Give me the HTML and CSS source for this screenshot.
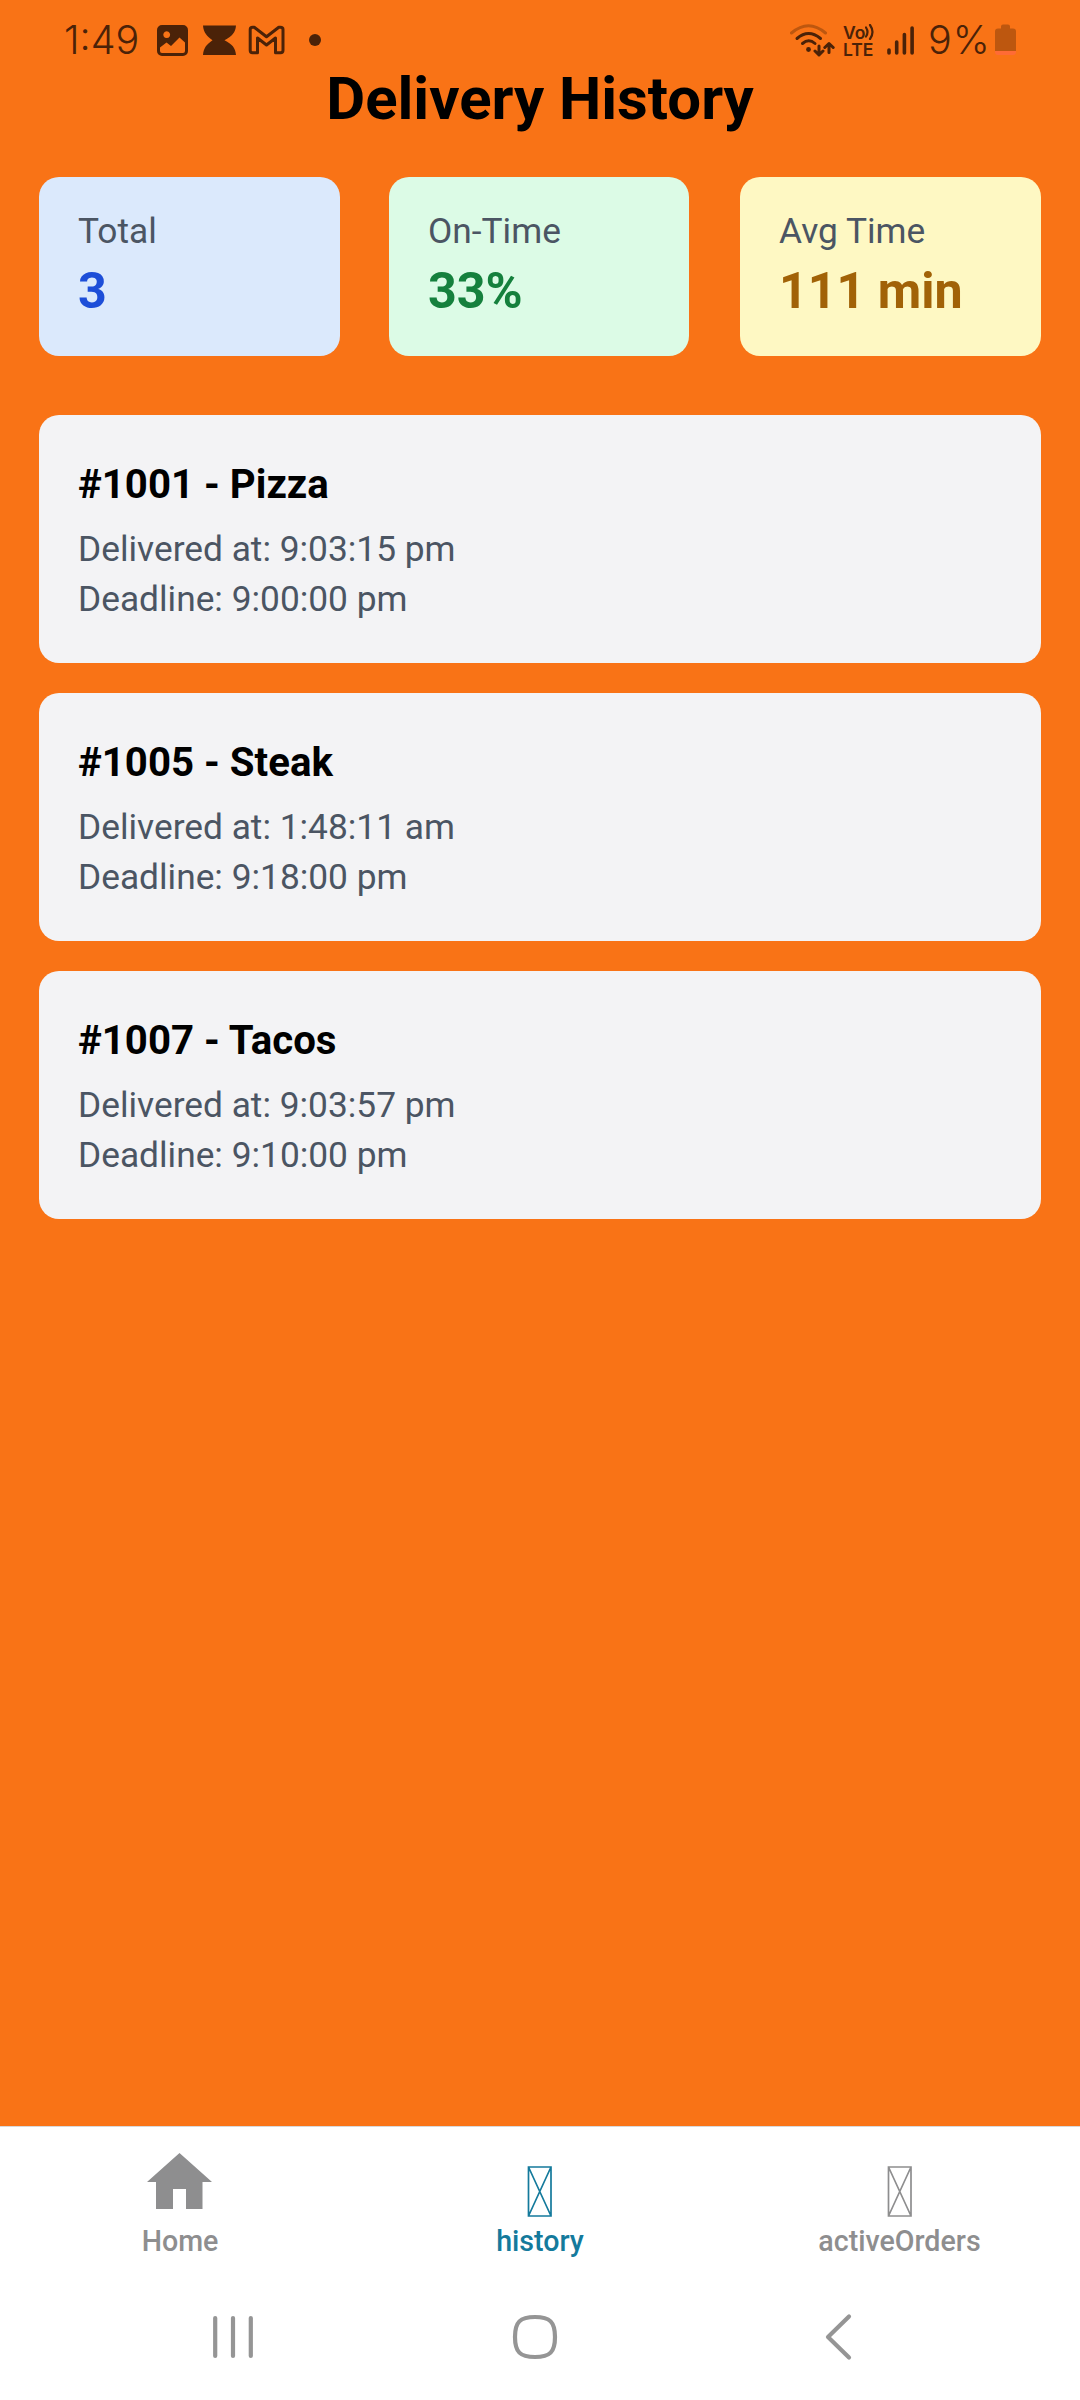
FILE: index.html
```
<!DOCTYPE html>
<html lang="en">
<head>
<meta charset="utf-8">
<title>Delivery History</title>
<link rel="stylesheet" href="styles.css">
</head>
<body>
<div class="screen">
  <header class="status">
    <span class="clock">1:49</span>
    <svg class="status-apps" width="166" height="40" viewBox="156 20 166 40">
      <path fill-rule="evenodd" d="M162 25h21a5 5 0 0 1 5 5v21a5 5 0 0 1-5 5h-21a5 5 0 0 1-5-5v-21a5 5 0 0 1 5-5zM160 47.500v3.500a2 2 0 0 0 2 2h21a2 2 0 0 0 2-2v-8.500l-5.500-5-8.500 8.500-4.500-3.500zM166.700 31.300a3.400 3.400 0 1 0 .01 0z"/>
      <path d="M203 25.500h33c-.5 7-4 11-11.500 14.800 7.500 3.700 11 7.700 11.500 14.700h-33c.5-7 4-11 9.500-14.700-5.500-3.800-9-7.800-9.500-14.800z"/>
      <path class="mail" d="M250.200 29.500q0-2.200 2.500-2.200h1.500l12.300 9.500 12.300-9.500h1.500q2.700 0 2.700 2.200v20.700q0 2.500-2.500 2.500h-5v-14.700l-9 7-9-7v14.700h-5q-2.300 0-2.300-2.500z"/>
      <circle cx="315" cy="40" r="6"/>
    </svg>
    <svg class="status-wifi" width="46" height="40" viewBox="789 20 46 40">
      <g class="line">
        <path class="faint" d="M791.500 33q17-14.500 34 0"/>
        <path d="M797 38.500q11.500-10 23.500 0"/>
        <path d="M802.500 43.500q6.300-5.500 12.500 0"/>
        <path class="arrows" d="M819 46v9m-4-4 4 4 4-4M829 52.500v-9m-4.200 4 4.200-4 4.200 4"/>
      </g>
      <circle cx="808.500" cy="49.500" r="2.400"/>
    </svg>
    <div class="volte"><span>Vo<svg width="10" height="16" viewBox="0 0 10 16"><path d="M1 3.500q3 4.500 0 9M5 1q5 7 0 14"/></svg></span><span>LTE</span></div>
    <svg class="status-signal" width="28" height="40" viewBox="887 20 28 40">
      <path d="M889 50v3M896.700 42v11M904.400 34.500v18.500M912.100 28v25"/>
    </svg>
    <span class="percent">9%</span>
    <svg class="battery" width="22" height="40" viewBox="995 20 22 40">
      <path class="cell" d="M1003 24.500h5q2 0 2 2v2h3q3 0 3 3v19.500h-21v-19.500q0-3 3-3h3v-2q0-2 2-2z"/>
      <path class="low" d="M995 51h21v1q0 3-3 3h-15q-3 0-3-3z"/>
    </svg>
  </header>
  <main>
    <h1>Delivery History</h1>
    <section class="stats">
      <div class="stat blue"><span>Total</span><strong>3</strong></div>
      <div class="stat green"><span>On-Time</span><strong>33%</strong></div>
      <div class="stat yellow"><span>Avg Time</span><strong>111 min</strong></div>
    </section>
    <section class="orders">
      <article><h2>#1001 - Pizza</h2><p>Delivered at: 9:03:15 pm</p><p>Deadline: 9:00:00 pm</p></article>
      <article><h2>#1005 - Steak</h2><p>Delivered at: 1:48:11 am</p><p>Deadline: 9:18:00 pm</p></article>
      <article><h2>#1007 - Tacos</h2><p>Delivered at: 9:03:57 pm</p><p>Deadline: 9:10:00 pm</p></article>
    </section>
  </main>
  <nav class="tabs">
    <a><svg width="66" height="68" viewBox="147 2150 66 68"><path fill="currentColor" d="M179.500 2153 212 2182h-9.500v27H186v-20h-13v20h-17v-27h-9z"/></svg>Home</a>
    <a class="active"><svg width="26" height="68" viewBox="0 0 26 68"><path class="missing" d="M1.500 17h22.500v49H1.500zl22.500 49m0-49L1.500 66"/></svg>history</a>
    <a><svg width="26" height="68" viewBox="0 0 26 68"><path class="missing" d="M1.500 17h22.500v49H1.500zl22.500 49m0-49L1.500 66"/></svg>activeOrders</a>
  </nav>
  <footer class="system">
    <svg width="60" height="60" viewBox="203 2307 60 60"><path d="M215.200 2318v38M233 2318v38M250.800 2318v38"/></svg>
    <svg width="60" height="60" viewBox="505 2307 60 60"><path d="M535 2317c15 0 20 5 20 20s-5 20-20 20-20-5-20-20 5-20 20-20z"/></svg>
    <svg width="60" height="60" viewBox="807 2307 60 60"><path d="M849 2316.500 828 2337l21 20.500"/></svg>
  </footer>
</div>
</body>
</html>
```
FILE: styles.css
```
* { box-sizing: border-box; }
body { margin: 0; font-family: Roboto, "Liberation Sans", sans-serif; }
h1, h2, p { margin: 0; }
svg { display: block; flex: none; }
.screen { width: 1080px; height: 2400px; display: flex; flex-direction: column; background: #f97316; }

.status { height: 60px; display: flex; align-items: flex-end; padding-left: 64px; color: #4b2208; flex: none; font-family: Inter, "Liberation Sans", sans-serif; }
.status svg { fill: #4b2208; }
.clock, .percent { font-size: 39.500px; font-weight: 350; line-height: 40px; white-space: nowrap; }
.clock { width: 92px; }
.status-apps { margin-right: 467px; }
.status .mail { fill: none; stroke: #4b2208; stroke-width: 3; stroke-linejoin: round; }
.line { fill: none; stroke: #4b2208; stroke-width: 3; stroke-linecap: round; stroke-linejoin: round; }
.faint { stroke: #bd570f; }
.volte { width: 44px; height: 40px; margin-left: 8px; padding-top: 4px; display: flex; flex-direction: column; font: 600 17.500px/17px Inter, "Liberation Sans", sans-serif; }
.volte span { display: flex; }
.volte svg { fill: none; stroke: #4b2208; stroke-width: 2.200; stroke-linecap: round; }
.status-signal path { stroke: #4b2208; stroke-width: 3.600; stroke-linecap: round; }
.percent { width: 67px; margin-left: 13px; letter-spacing: 1px; }
.status .cell { fill: #bd570f; }
.status .low { fill: #ff6b35; }

main { flex: 1; padding: 0 39px; }
h1 { height: 117px; padding-top: 3px; text-align: center; font-size: 59.900px; line-height: 72px; font-weight: 700; }
.stats { display: grid; grid-template-columns: 350px 351px 301px; }
.stat { width: 301px; height: 178.700px; padding: 29px 39px 0; border-radius: 20px; display: flex; flex-direction: column; }
.stat span { font-size: 35.300px; line-height: 50px; color: #4b5563; }
.stat strong { font-size: 50.200px; line-height: 69px; white-space: nowrap; }
.blue { background: #dbe9fc; }
.blue strong { color: #1d4ed8; }
.green { width: 300px; background: #dcfbe6; }
.green strong { color: #15803d; }
.yellow { background: #fef8c3; }
.yellow strong { color: #a16207; }

.orders { display: flex; flex-direction: column; gap: 30px; margin-top: 59.300px; }
article { height: 248px; padding: 41px 39px 0; border-radius: 20px; background: #f3f3f5; }
h2 { font-size: 40.200px; line-height: 57px; font-weight: 700; }
h2 + p { margin-top: 11px; }
p { font-size: 35.300px; line-height: 50px; color: #4b5563; }

.tabs { height: 146px; flex: none; display: grid; grid-template-columns: repeat(3, 1fr); background: #fff; border-top: 1px solid #d8d8d8; color: #8e8e8f; font-size: 28.600px; line-height: 34px; font-weight: 500; }
.tabs a { display: flex; flex-direction: column; align-items: center; padding-top: 23px; gap: 6px; }
.tabs a:last-child { padding-right: 1px; }
.tabs .active { color: #147a9c; }
.missing { fill: none; stroke: currentColor; stroke-width: 1.700; }
.system { height: 128px; flex: none; display: flex; gap: 242px; padding: 35px 0 0 203px; background: #fff; }
.system path { fill: none; stroke: #959595; stroke-width: 4.200; stroke-linecap: round; stroke-linejoin: round; }
```
